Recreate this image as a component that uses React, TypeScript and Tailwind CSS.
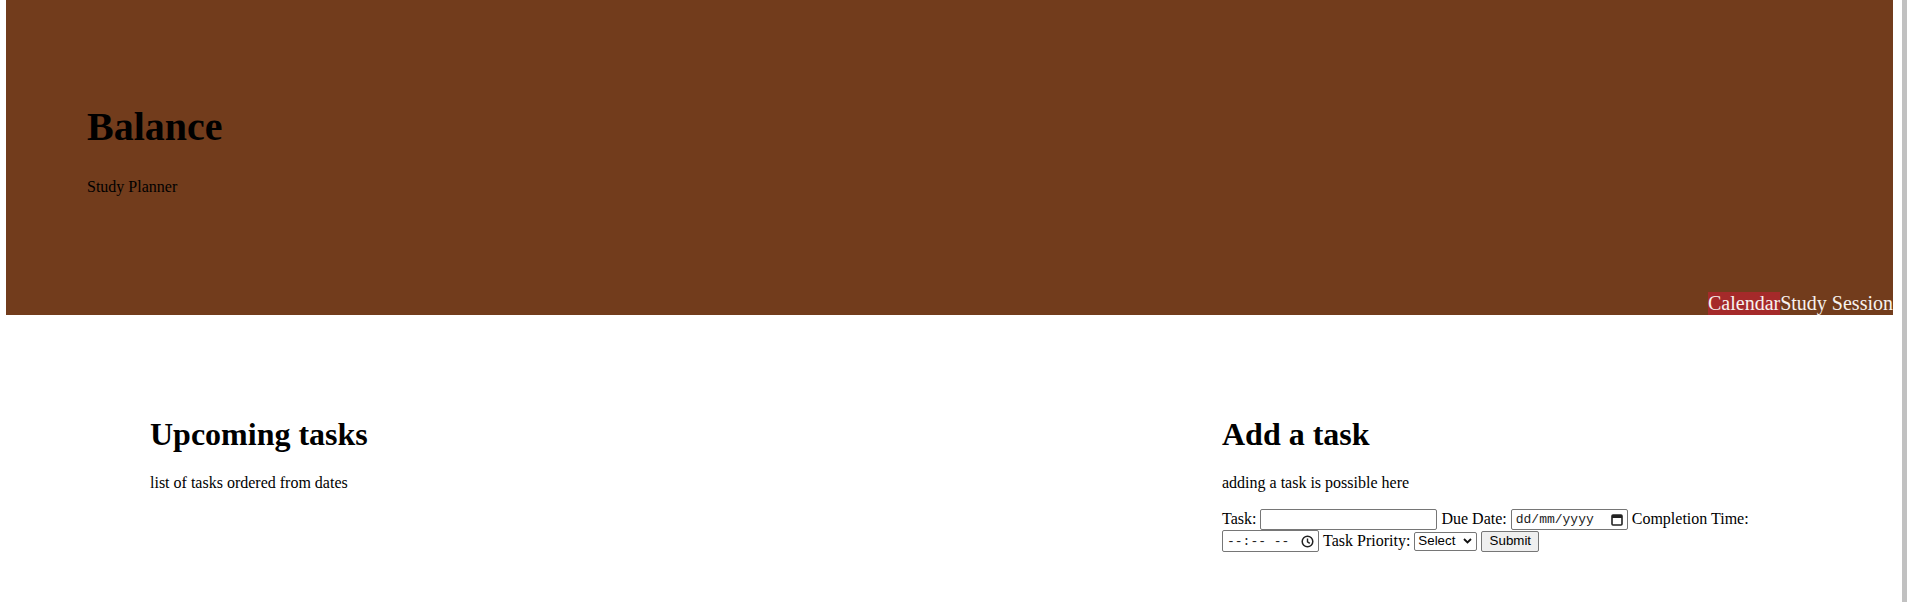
import React from 'react';

function CalendarIcon() {
  return (
    <svg width="12" height="13" viewBox="0 0 12 13" className="shrink-0">
      <rect x="1" y="2" width="10" height="10" rx="1" fill="none" stroke="#222" strokeWidth="1.6" />
      <rect x="1" y="2" width="10" height="3" fill="#222" />
    </svg>
  );
}

function ClockIcon() {
  return (
    <svg width="13" height="13" viewBox="0 0 13 13" className="shrink-0">
      <circle cx="6.5" cy="6.5" r="5.3" fill="none" stroke="#222" strokeWidth="1.5" />
      <path d="M6.5 3.4 V6.8 L8.8 8.4" fill="none" stroke="#222" strokeWidth="1.4" />
    </svg>
  );
}

function Chevron() {
  return (
    <svg width="9" height="6" viewBox="0 0 9 6" className="shrink-0">
      <path d="M1 1 L4.5 4.5 L8 1" fill="none" stroke="#111" strokeWidth="1.8" />
    </svg>
  );
}

export default function App() {
  return (
    <div className="relative min-h-[602px] bg-white font-['Liberation_Serif','Times_New_Roman',serif] text-black">
      <header className="ml-[6px] mr-[14px] flex h-[315px] flex-col bg-[#723c1c]">
        <div className="pl-[81px] pt-[104px]">
          <h1 className="text-[40px] font-bold leading-[46px]">Balance</h1>
          <p className="mt-[28px] text-base leading-[18px]">Study Planner</p>
        </div>
        <nav className="mt-auto flex self-end text-[20px] leading-[23px] text-[#f7f2ef]">
          <a className="bg-[#a52a2a]">Calendar</a>
          <a>Study Session</a>
        </nav>
      </header>

      <main className="flex pl-[150px] pt-[101px]">
        <section className="w-[1072px]">
          <h2 className="text-[32px] font-bold leading-[37px]">Upcoming tasks</h2>
          <p className="mt-[21px] text-base leading-[18px]">list of tasks ordered from dates</p>
        </section>

        <section className="w-[560px]">
          <h2 className="text-[32px] font-bold leading-[37px]">Add a task</h2>
          <p className="mt-[21px] text-base leading-[18px]">adding a task is possible here</p>
          <form className="mt-[16px] flex flex-wrap items-center gap-x-[4px] text-base leading-[22px]">
            <label htmlFor="task">Task:</label>
            <input
              id="task"
              type="text"
              className="h-[21px] w-[177px] rounded-[2px] border border-[#767676] bg-white px-[2px] font-['Liberation_Sans',Arial,sans-serif] text-[13px] outline-none"
            />
            <span>Due Date:</span>
            <span className="flex h-[21px] w-[117px] items-center justify-between rounded-[2px] border border-[#767676] pl-[4px] pr-[4px] font-['Liberation_Mono','DejaVu_Sans_Mono',monospace] text-[13px] leading-none text-[#222]">
              <span>dd/mm/yyyy</span>
              <CalendarIcon />
            </span>
            <span>Completion Time:</span>
            <span className="flex h-[22px] w-[97px] items-center justify-between rounded-[2px] border border-[#767676] pl-[4px] pr-[4px] font-['Liberation_Mono','DejaVu_Sans_Mono',monospace] text-[13px] leading-none text-[#222]">
              <span className="whitespace-pre">--:-- --</span>
              <ClockIcon />
            </span>
            <span>Task Priority:</span>
            <span className="flex h-[19px] w-[63px] items-center justify-between rounded-[2px] border border-[#767676] bg-white pl-[3px] pr-[4px] font-['Liberation_Sans',Arial,sans-serif] text-[13.33px] leading-none">
              <span>Select</span>
              <Chevron />
            </span>
            <button
              type="submit"
              className="h-[21px] w-[58px] rounded-[2px] border border-[#767676] bg-[#efefef] font-['Liberation_Sans',Arial,sans-serif] text-[13.33px] leading-none"
            >
              Submit
            </button>
          </form>
        </section>
      </main>

      <div className="fixed right-0 top-0 h-full w-[5px] bg-[#c1c1c1]" />
    </div>
  );
}
